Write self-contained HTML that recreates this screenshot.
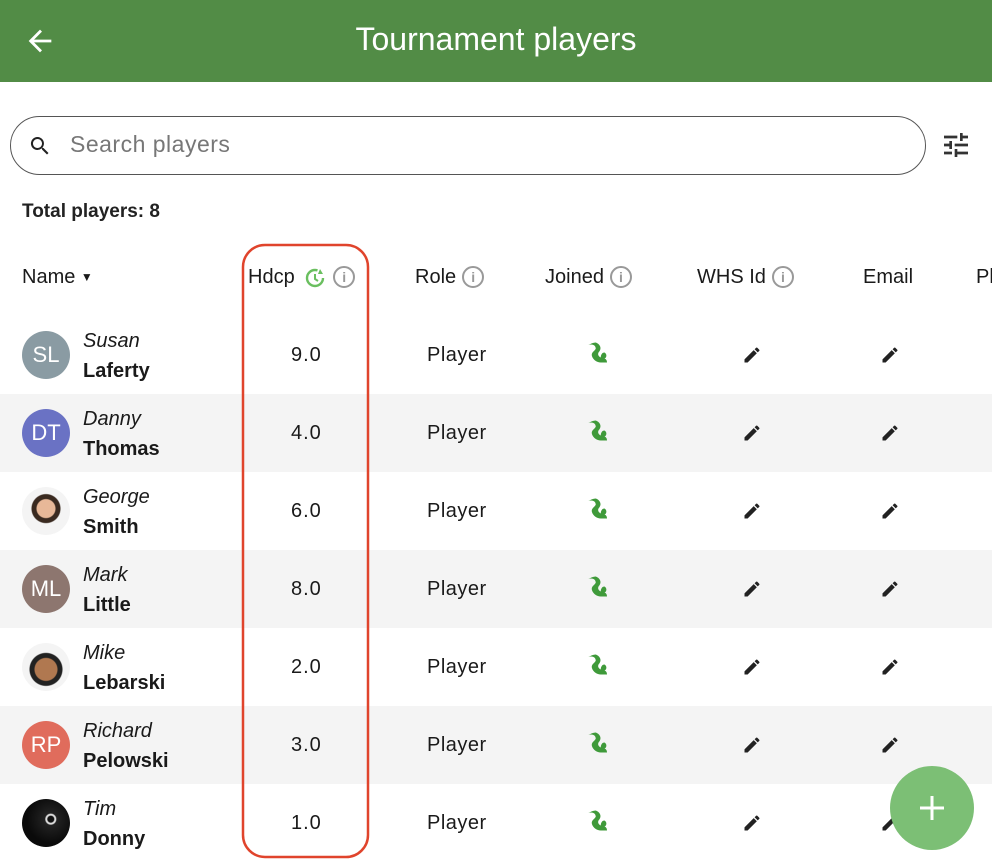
<!DOCTYPE html>
<html><head><meta charset="utf-8"><style>
*{margin:0;padding:0;box-sizing:border-box}
body{width:992px;height:868px;overflow:hidden;background:#fff;font-family:"Liberation Sans",sans-serif;color:#1a1a1a;position:relative}
.hdr{position:absolute;left:0;top:0;width:992px;height:82px;background:#528c46}
.title{position:absolute;left:0;width:992px;top:21px;text-align:center;color:#fff;font-size:32px}
.abs{position:absolute}
.search{left:10px;top:116px;width:916px;height:59px;border:1.5px solid #555;border-radius:30px}
.ph{left:70px;top:131px;font-size:23px;color:#777;letter-spacing:.5px}
.th{position:absolute;top:266px;font-size:20px;color:#1a1a1a}
.info{display:inline-block;width:22px;height:22px;border:2px solid #999;border-radius:50%;color:#999;font-size:14px;text-align:center;line-height:18px;vertical-align:top;margin-top:0px;margin-left:6px;font-weight:bold}
.row{position:absolute;left:0;width:992px;height:78px}
.g{background:#f4f4f4}
.av{position:absolute;left:22px;width:48px;height:48px;border-radius:50%;color:#fff;font-size:22px;text-align:center;line-height:48px}
.fn{position:absolute;left:83px;font-style:italic;font-size:20px}
.ln{position:absolute;left:83px;font-size:20px;font-weight:bold}
.hd{position:absolute;left:291px;font-size:20px;letter-spacing:1px}
.rl{position:absolute;left:427px;font-size:20px;letter-spacing:.5px}
</style></head><body>
<div class="hdr"></div>
<svg class="abs" style="left:23px;top:24px" width="34" height="34" viewBox="0 0 24 24"><path d="M20 11H7.8l5.6-5.6L12 4l-8 8 8 8 1.4-1.4L7.8 13H20z" fill="#fff"/></svg>
<div class="title">Tournament players</div>
<div class="abs search"></div>
<svg class="abs" style="left:28px;top:134px" width="24" height="24" viewBox="0 0 24 24"><path d="M15.5 14h-.8l-.3-.3A6.5 6.5 0 1 0 9.5 16a6.5 6.5 0 0 0 4.2-1.6l.3.3v.8l5 5 1.5-1.5-5-5zm-6 0C7 14 5 12 5 9.5S7 5 9.5 5 14 7 14 9.5 12 14 9.5 14z" fill="#222"/></svg>
<div class="abs ph">Search players</div>
<svg class="abs" style="left:940px;top:129px" width="32" height="32" viewBox="0 0 24 24"><path d="M3 17v2h6v-2H3zM3 5v2h10V5H3zm10 16v-2h8v-2h-8v-2h-2v6h2zM7 9v2H3v2h4v2h2V9H7zm14 4v-2H11v2h10zm-6-4h2V7h4V5h-4V3h-2v6z" fill="#333"/></svg>
<div class="abs" style="left:22px;top:201px;font-size:19px;font-weight:bold;color:#222">Total players: 8</div>

<div class="th" style="left:22px">Name <span style="font-size:12px;vertical-align:2px">▼</span></div>
<div class="th" style="left:248px">Hdcp
<svg width="24" height="24" viewBox="0 0 24 24" style="vertical-align:top;margin-left:3px"><circle cx="12" cy="12" r="8" fill="none" stroke="#6abf5f" stroke-width="2.4" stroke-dasharray="40 12"/><path d="M12 8v5l3 2" stroke="#6abf5f" stroke-width="2" fill="none"/><path d="M17 3l3 5-5 0z" fill="#6abf5f"/></svg><span class="info">i</span></div>
<div class="th" style="left:415px">Role<span class="info">i</span></div>
<div class="th" style="left:545px">Joined<span class="info">i</span></div>
<div class="th" style="left:697px">WHS Id<span class="info">i</span></div>
<div class="th" style="left:863px">Email</div>
<div class="th" style="left:976px">Pl</div>

<div class="row" style="top:316px"></div>
<div class="row g" style="top:394px"></div>
<div class="row" style="top:472px"></div>
<div class="row g" style="top:550px"></div>
<div class="row" style="top:628px"></div>
<div class="row g" style="top:706px"></div>
<div class="row" style="top:784px"></div>

<div class="av" style="top:331px;background:#8a9ba3">SL</div>
<div class="fn" style="top:330px">Susan</div><div class="ln" style="top:360px">Laferty</div>
<div class="av" style="top:409px;background:#6a72c4">DT</div>
<div class="fn" style="top:408px">Danny</div><div class="ln" style="top:438px">Thomas</div>
<div class="av" style="top:487px;background:radial-gradient(circle at 50% 45%,#e8b898 0 9px,#3a2a20 10px 14px,#f4f4f4 15px)"></div>
<div class="fn" style="top:486px">George</div><div class="ln" style="top:516px">Smith</div>
<div class="av" style="top:565px;background:#8d766f">ML</div>
<div class="fn" style="top:564px">Mark</div><div class="ln" style="top:594px">Little</div>
<div class="av" style="top:643px;background:radial-gradient(circle at 50% 55%,#b07850 0 11px,#222 12px 16px,#f4f4f4 17px)"></div>
<div class="fn" style="top:642px">Mike</div><div class="ln" style="top:672px">Lebarski</div>
<div class="av" style="top:721px;background:#e06c5c">RP</div>
<div class="fn" style="top:720px">Richard</div><div class="ln" style="top:750px">Pelowski</div>
<div class="av" style="top:799px;background:radial-gradient(circle at 60% 42%,#111 0 3px,#ddd 4px 5px,#222 6px,#0a0a0a 24px)"></div>
<div class="fn" style="top:798px">Tim</div><div class="ln" style="top:828px">Donny</div>

<div class="hd" style="top:344px">9.0</div><div class="hd" style="top:422px">4.0</div><div class="hd" style="top:500px">6.0</div><div class="hd" style="top:578px">8.0</div><div class="hd" style="top:656px">2.0</div><div class="hd" style="top:734px">3.0</div><div class="hd" style="top:812px">1.0</div>
<div class="rl" style="top:344px">Player</div><div class="rl" style="top:422px">Player</div><div class="rl" style="top:500px">Player</div><div class="rl" style="top:578px">Player</div><div class="rl" style="top:656px">Player</div><div class="rl" style="top:734px">Player</div><div class="rl" style="top:812px">Player</div>

<svg width="0" height="0" style="position:absolute"><defs>
<symbol id="sq" viewBox="0 0 24 24"><path d="M5 4c3-1 6 0 6 3-1 2-4 3-3 6 1 3 4 5 7 5h5c0-2-1-3-2-3 2-1 2-4 0-5-2 0-3 2-3 4-2-1-3-3-1-5 2-3 0-6-3-7-2 0-4 1-6 2z" fill="#3f9a3a"/></symbol>
<symbol id="pen" viewBox="0 0 24 24"><path d="M3 17.25V21h3.75L17.8 9.94l-3.75-3.75L3 17.25zM20.7 7.04a1 1 0 0 0 0-1.41l-2.34-2.34a1 1 0 0 0-1.41 0l-1.83 1.83 3.75 3.75 1.83-1.83z" fill="#222"/></symbol>
</defs></svg>
<svg class="abs" style="left:0;top:0" width="992" height="868">
<g>
<use href="#sq" x="582" y="340" width="30" height="30"/><use href="#sq" x="582" y="418" width="30" height="30"/><use href="#sq" x="582" y="496" width="30" height="30"/><use href="#sq" x="582" y="574" width="30" height="30"/><use href="#sq" x="582" y="652" width="30" height="30"/><use href="#sq" x="582" y="730" width="30" height="30"/><use href="#sq" x="582" y="808" width="30" height="30"/>
<use href="#pen" x="742" y="345" width="20" height="20"/><use href="#pen" x="742" y="423" width="20" height="20"/><use href="#pen" x="742" y="501" width="20" height="20"/><use href="#pen" x="742" y="579" width="20" height="20"/><use href="#pen" x="742" y="657" width="20" height="20"/><use href="#pen" x="742" y="735" width="20" height="20"/><use href="#pen" x="742" y="813" width="20" height="20"/>
<use href="#pen" x="880" y="345" width="20" height="20"/><use href="#pen" x="880" y="423" width="20" height="20"/><use href="#pen" x="880" y="501" width="20" height="20"/><use href="#pen" x="880" y="579" width="20" height="20"/><use href="#pen" x="880" y="657" width="20" height="20"/><use href="#pen" x="880" y="735" width="20" height="20"/><use href="#pen" x="880" y="813" width="20" height="20"/>
</g>
<rect x="243" y="245" width="125" height="612" rx="22" fill="none" stroke="#e0442c" stroke-width="2.5"/>
<circle cx="932" cy="808" r="42" fill="#7cbf75"/>
<path d="M932 796v24M920 808h24" stroke="#fff" stroke-width="3"/>
</svg>
</body></html>
